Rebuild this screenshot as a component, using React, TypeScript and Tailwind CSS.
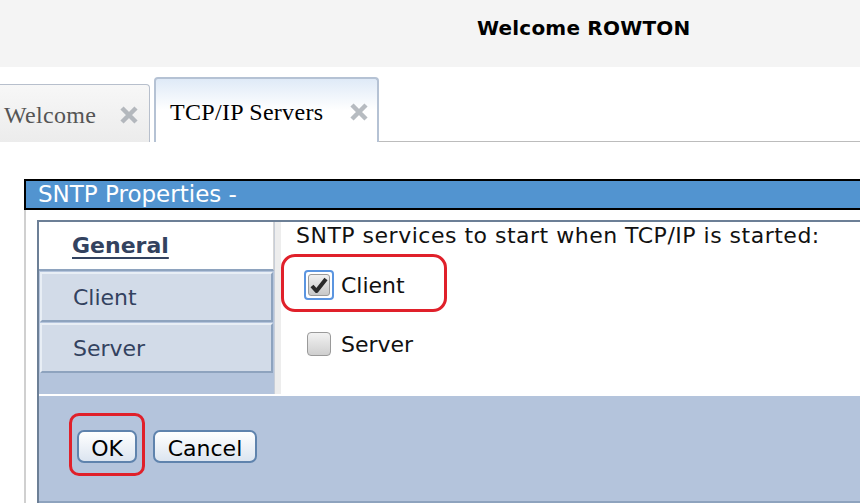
import React from "react";

const sans = { fontFamily: '"DejaVu Sans", Verdana, sans-serif' };

const CloseX = () => (
  <svg width="20" height="18" viewBox="0 0 20 18" className="opacity-70">
    <path d="M3 2 L17 16 M17 2 L3 16" stroke="#9aa0a8" strokeWidth="4.5" strokeLinecap="butt" />
  </svg>
);

const Tabs = () => (
  <div className="flex items-end h-[65px] mt-[10px]">
    <div className="ml-[-12px] h-[58px] w-[162px] flex items-center justify-between pl-[15px] pr-[10px] pt-[2px] border border-b-0 border-[#b7bfcc] rounded-t-[4px] bg-gradient-to-b from-[#f7f7f7] to-[#ececec] font-['Liberation_Serif',serif] text-[24px] tracking-[0.3px] text-[#555]">
      <span>Welcome</span>
      <CloseX />
    </div>
    <div className="ml-[4px] h-[65px] w-[225px] flex items-center justify-between pl-[14px] pr-[8px] pt-[2px] border-2 border-b-0 border-[#b5c2d4] rounded-t-[4px] bg-gradient-to-b from-[#dfeaf7] via-white to-white font-['Liberation_Serif',serif] text-[24px] tracking-[0.3px] text-black">
      <span>TCP/IP Servers</span>
      <CloseX />
    </div>
    <div className="flex-1 border-b border-[#bcbcbc]" />
  </div>
);

const Check = ({ checked }: { checked?: boolean }) =>
  checked ? (
    <div className="w-[30px] h-[30px] rounded-[4px] border-2 border-[#5b95e0] p-[2px]">
      <div className="w-full h-full rounded-[3px] border border-[#9a9a9a] bg-gradient-to-b from-[#f0f0f0] to-[#c8c8c8] flex items-center justify-center">
        <svg width="18" height="16" viewBox="0 0 18 16">
          <path d="M2 9 L6.5 14 L16 2" fill="none" stroke="#2a2a2a" strokeWidth="4" strokeLinejoin="round" />
        </svg>
      </div>
    </div>
  ) : (
    <div className="w-[30px] h-[30px] p-[3px]">
      <div className="w-full h-full rounded-[4px] border border-[#9a9a9a] bg-gradient-to-b from-[#f2f2f2] to-[#cfcfcf]" />
    </div>
  );

const NavItem = ({ label }: { label: string }) => (
  <div className="h-[50px] mx-[1px] mt-[1px] flex items-center pl-[31px] bg-[#d2dbe8] border-2 border-[#8ea3be] border-t-[#e8eef5] border-l-[#e8eef5] text-[#33425f] text-[22px]">
    {label}
  </div>
);

export default function App() {
  return (
    <div className="w-[860px] h-[504px] overflow-hidden bg-white" style={sans}>
      <div className="h-[67px] bg-[#f4f4f4] pl-[477px] pt-[13px]">
        <span className="font-bold text-[20px] tracking-[0.2px] text-black">Welcome ROWTON</span>
      </div>
      <Tabs />
      <div className="mt-[37px] ml-[24px] w-[900px]">
        <div className="h-[31px] bg-[#5294d0] border-2 border-r-0 border-black flex items-center pl-[12px] text-white text-[23px]">
          SNTP Properties -
        </div>
        <div className="border-l-2 border-[#d0d0d0] pl-[11px] pt-[10px]">
          <div className="border-t-2 border-l-2 border-[#6c7f96]">
            <div className="flex">
              <div className="w-[236px] bg-[#b4c4dc] pb-[21px] border-r border-[#c8ced8]">
                <div className="h-[49px] bg-white flex items-center pl-[33px] border-b-2 border-[#8ea3be] border-r border-r-[#d6d6d6]">
                  <span className="font-bold underline text-[22px] text-[#33425f] underline-offset-[4px]">General</span>
                </div>
                <NavItem label="Client" />
                <NavItem label="Server" />
              </div>
              <div className="w-[6px] bg-[#ededed]" />
              <div className="flex-1 pl-[15px] text-[22px] tracking-[0.5px] text-[#111]">
                <div className="-mt-[3px]">SNTP services to start when TCP/IP is started:</div>
                <div className="relative mt-[18px] ml-[8px] flex items-center gap-[7px] h-[30px] tracking-normal">
                  <div className="absolute left-[-23px] top-[-16px] w-[166px] h-[58px] rounded-[14px] border-[3px] border-[#e0202a]" />
                  <Check checked />
                  <span>Client</span>
                </div>
                <div className="mt-[29px] ml-[8px] flex items-center gap-[7px] h-[30px] tracking-normal">
                  <Check />
                  <span>Server</span>
                </div>
              </div>
            </div>
            <div className="h-[109px] bg-[#b4c4dc] border-t-2 border-b-2 border-t-white border-b-[#8ea3be] pl-[38px] pt-[34px] flex items-start gap-[16px]">
              <div className="relative">
                <div className="absolute left-[-8px] top-[-17px] w-[76px] h-[63px] rounded-[10px] border-[3px] border-[#e0202a]" />
                <button className="h-[33px] w-[60px] rounded-[7px] border-2 border-[#5f83ad] bg-gradient-to-b from-white to-[#dce5f0] text-[22px] text-black" style={sans}>
                  OK
                </button>
              </div>
              <button className="h-[33px] w-[104px] rounded-[7px] border-2 border-[#5f83ad] bg-gradient-to-b from-white to-[#dce5f0] text-[22px] text-black" style={sans}>
                Cancel
              </button>
            </div>
          </div>
        </div>
      </div>
    </div>
  );
}
